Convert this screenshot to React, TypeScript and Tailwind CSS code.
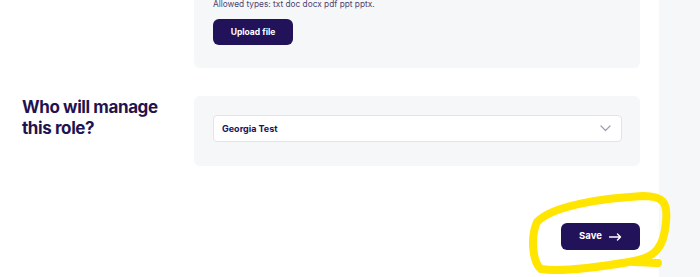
const App = () => {
  return (
    <div className="w-[700px] h-[277px] overflow-hidden flex bg-white font-['Inter',sans-serif]">
      {/* Main column */}
      <div className="relative w-[659px] flex flex-col">
        {/* Upload card (cut off at top) */}
        <div className="flex">
          <div className="w-[194px]" />
          <div className="w-[446px] -mt-[10px] pt-[9px] pb-[23px] px-[19px] bg-[#f6f7f9] rounded-b-md">
            <p className="text-[8.3px] leading-[10px] text-[#4b4470]">
              Allowed types: txt doc docx pdf ppt pptx.
            </p>
            <button className="mt-[10px] w-[80px] h-[26px] rounded-md bg-[#21125a] text-white text-[8.5px] font-bold">
              Upload file
            </button>
          </div>
        </div>

        {/* Manager row */}
        <div className="flex mt-[28px]">
          <div className="w-[194px] pl-[22px] pt-[1px]">
            <h2 className="text-[17px] leading-[21px] font-bold tracking-[-0.4px] text-[#1f1350]">
              Who will manage
              <br />
              this role?
            </h2>
          </div>
          <div className="w-[446px] pt-[19px] pb-[24px] pl-[19px] pr-[18px] bg-[#f6f7f9] rounded-md">
            <div className="h-[27px] bg-white border border-[#e2e4eb] rounded flex items-center justify-between pl-[8px] pr-[10px]">
              <span className="text-[9px] font-bold text-[#21125a]">Georgia Test</span>
              <svg width="11" height="7" viewBox="0 0 11 7" fill="none">
                <path d="M1 1l4.5 4.5L10 1" stroke="#9aa0b3" strokeWidth="1.2" strokeLinecap="round" strokeLinejoin="round" />
              </svg>
            </div>
          </div>
        </div>

        {/* Save */}
        <div className="flex justify-end w-[640px] mt-[57px]">
          <button className="w-[79px] h-[27px] rounded-md bg-[#21125a] text-white text-[9.5px] font-bold flex items-center justify-center gap-[7px]">
            Save
            <svg width="13" height="8" viewBox="0 0 13 8" fill="none">
              <path d="M0.5 4h11M8.5 1l3 3-3 3" stroke="white" strokeWidth="1.4" strokeLinecap="round" strokeLinejoin="round" />
            </svg>
          </button>
        </div>

        {/* Yellow highlight scribble */}
        <svg
          className="absolute left-[525px] top-[188px] pointer-events-none"
          width="150"
          height="89"
          viewBox="0 0 150 89"
          fill="none"
        >
          <path
            d="M12 34 C28 17, 80 10, 118 8 C138 8, 143 14, 141 34 C139 58, 132 70, 104 74 C74 79, 34 84, 16 81 C8 75, 5 50, 12 34 Z M108 74 C120 74, 128 75, 133 75"
            stroke="#ffe500"
            strokeWidth="8"
            strokeLinecap="round"
            strokeLinejoin="round"
          />
        </svg>
      </div>

      {/* Right strip */}
      <div className="flex-1 bg-[#f6f7f9]" />
    </div>
  );
};

export default App;
